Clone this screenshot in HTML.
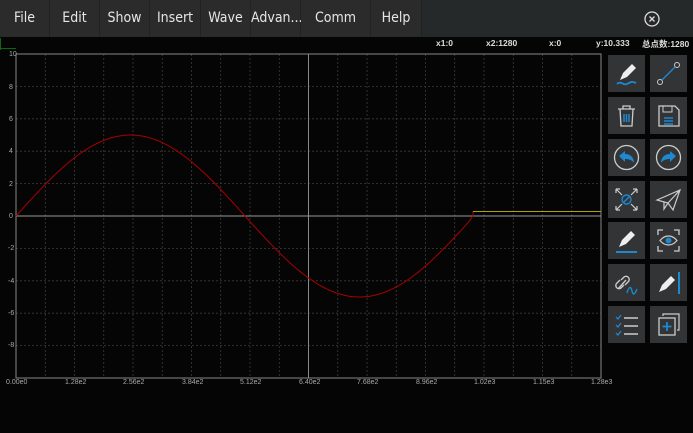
<!DOCTYPE html>
<html><head><meta charset="utf-8"><style>
body{margin:0;width:693px;height:433px;background:#050505;overflow:hidden;font-family:"Liberation Sans","Noto Sans CJK SC",sans-serif;position:relative}
.menu{position:absolute;left:0;top:0;width:693px;height:37px;background:#26292a}
.menu div{position:absolute;top:0;height:37px;line-height:37px;text-align:center;color:#e6e6e6;font-size:14px;font-family:"Liberation Sans Narrow","DejaVu Sans Condensed","Liberation Sans",sans-serif;background:#2b2b2b;border-right:1px solid #222}
.st{position:absolute;top:38px;font-size:8.5px;color:#ddd;font-weight:bold}
.btn{position:absolute;width:37px;height:37px;background:#333436}
.btn svg{width:37px;height:37px}
.xl{position:absolute;top:379px;font-size:7px;color:#aaa}
.yl{position:absolute;left:9px;font-size:7px;color:#aaa}
</style></head><body>
<div class="menu">
<div style="left:0;width:49px">File</div>
<div style="left:50px;width:49px">Edit</div>
<div style="left:100px;width:49px">Show</div>
<div style="left:150px;width:50px">Insert</div>
<div style="left:201px;width:49px">Wave</div>
<div style="left:251px;width:49px">Advan...</div>
<div style="left:301px;width:69px">Comm</div>
<div style="left:371px;width:50px">Help</div>
<svg style="position:absolute;left:643px;top:10px" width="18" height="18"><circle cx="9" cy="9" r="7" fill="none" stroke="#ddd" stroke-width="1.3"/><path d="M6.5 6.5L11.5 11.5M11.5 6.5L6.5 11.5" stroke="#ddd" stroke-width="1.3"/></svg>
</div>
<div style="position:absolute;left:0;top:38px;width:1px;height:12px;background:#0a6a0a"></div>
<div style="position:absolute;left:0;top:48px;width:16px;height:1px;background:#0a6a0a"></div>
<div class="st" style="left:436px">x1:0</div>
<div class="st" style="left:486px">x2:1280</div>
<div class="st" style="left:549px">x:0</div>
<div class="st" style="left:596px">y:10.333</div>
<div class="st" style="left:642px">总点数:1280</div>
<svg id="plot" style="position:absolute;left:0;top:0" width="605" height="433"></svg>
<div class="yl" style="top:51px">10</div><div class="yl" style="top:84px">8</div><div class="yl" style="top:116px">6</div><div class="yl" style="top:148px">4</div><div class="yl" style="top:181px">2</div><div class="yl" style="top:213px">0</div><div class="yl" style="top:245px;left:8px">-2</div><div class="yl" style="top:278px;left:8px">-4</div><div class="yl" style="top:310px;left:8px">-6</div><div class="yl" style="top:342px;left:8px">-8</div>
<div class="xl" style="left:6px">0.00e0</div><div class="xl" style="left:65px">1.28e2</div><div class="xl" style="left:123px">2.56e2</div><div class="xl" style="left:182px">3.84e2</div><div class="xl" style="left:240px">5.12e2</div><div class="xl" style="left:299px">6.40e2</div><div class="xl" style="left:357px">7.68e2</div><div class="xl" style="left:416px">8.96e2</div><div class="xl" style="left:474px">1.02e3</div><div class="xl" style="left:533px">1.15e3</div><div class="xl" style="left:591px">1.28e3</div>
<script>
var s='',L=16,T=54,R=601,B=378;
for(var i=1;i<20;i++){var x=L+i*(R-L)/20;s+='<line x1="'+x+'" y1="'+T+'" x2="'+x+'" y2="'+B+'" stroke="#3c3c3c" stroke-dasharray="2,2" stroke-width="0.8"/>';}
for(var i=1;i<10;i++){var y=T+i*(B-T)/10;s+='<line x1="'+L+'" y1="'+y+'" x2="'+R+'" y2="'+y+'" stroke="#3c3c3c" stroke-dasharray="2,2" stroke-width="0.8"/>';}
s+='<rect x="'+L+'" y="'+T+'" width="'+(R-L)+'" height="'+(B-T)+'" fill="none" stroke="#888"/>';
s+='<line x1="308.5" y1="'+T+'" x2="308.5" y2="'+B+'" stroke="#888"/>';
s+='<line x1="'+L+'" y1="216" x2="'+R+'" y2="216" stroke="#999"/>';
var p='M';for(var x=L;x<=471;x+=3){var y=216-16.2*5*Math.sin(2*Math.PI*(x-L)/458);p+=x.toFixed(1)+' '+y.toFixed(1)+' L';}
p+='473 216 L473 211';
s+='<path d="'+p+'" fill="none" stroke="#a00" stroke-width="1"/>';
s+='<line x1="473" y1="211.5" x2="'+R+'" y2="211.5" stroke="#b0a000"/>';
document.getElementById('plot').innerHTML=s;
</script>
<div class="btn" style="left:608px;top:55px"><svg><path d="M12 25l3-7 9-9 4 4-9 9z" fill="#eee"/><path d="M9 29c4-4 6 2 10 0s4-3 9-1" stroke="#1e88d0" stroke-width="1.8" fill="none"/></svg></div>
<div class="btn" style="left:650px;top:55px"><svg><circle cx="10" cy="27" r="2.5" fill="none" stroke="#ccc"/><circle cx="27" cy="10" r="2.5" fill="none" stroke="#ccc"/><path d="M12 25L25 12" stroke="#1e88d0" stroke-width="1.3"/></svg></div>
<div class="btn" style="left:608px;top:97px"><svg><path d="M10 12h17M15 12v-3h7v3M12 12l1 17h11l1-17" fill="none" stroke="#ccc" stroke-width="1.3"/><path d="M16 17v8M18.5 17v8M21 17v8" stroke="#1e88d0" stroke-width="1.5"/></svg></div>
<div class="btn" style="left:650px;top:97px"><svg><path d="M9 9h16l4 4v16H9z" fill="none" stroke="#ccc" stroke-width="1.3"/><rect x="13" y="9" width="9" height="6" fill="none" stroke="#ccc"/><path d="M14 21h9M14 24h9M14 27h9" stroke="#1e88d0" stroke-width="1.5"/></svg></div>
<div class="btn" style="left:608px;top:139px"><svg><circle cx="18.5" cy="18.5" r="12" fill="none" stroke="#ccc" stroke-width="1.3"/><path d="M11 17l6-5v3c6 0 9 4 9 9-2-3-5-4-9-4v3z" fill="#1e88d0"/></svg></div>
<div class="btn" style="left:650px;top:139px"><svg><circle cx="18.5" cy="18.5" r="12" fill="none" stroke="#ccc" stroke-width="1.3"/><path d="M26 17l-6-5v3c-6 0-9 4-9 9 2-3 5-4 9-4v3z" fill="#1e88d0"/></svg></div>
<div class="btn" style="left:608px;top:181px"><svg><path d="M8 8l6 6M8 8h4M8 8v4M29 8l-6 6M29 8h-4M29 8v4M8 29l6-6M8 29h4M8 29v-4M29 29l-6-6M29 29h-4M29 29v-4" stroke="#ccc" stroke-width="1.2" fill="none"/><circle cx="18.5" cy="18.5" r="4.5" fill="none" stroke="#1e88d0" stroke-width="1.4"/><path d="M15.5 21.5l6-6" stroke="#1e88d0" stroke-width="1.4"/></svg></div>
<div class="btn" style="left:650px;top:181px"><svg><path d="M7 19L30 9 23 29 18 22zM18 22L30 9M14 21v7l4-6" fill="none" stroke="#ccc" stroke-width="1.2"/></svg></div>
<div class="btn" style="left:608px;top:222px"><svg><path d="M11 25l3-7 9-9 4 4-9 9z" fill="#eee"/><path d="M8 30h21" stroke="#1e88d0" stroke-width="2"/></svg></div>
<div class="btn" style="left:650px;top:222px"><svg><path d="M8 13V8h5M24 8h5v5M29 24v5h-5M13 29H8v-5" stroke="#ccc" stroke-width="1.3" fill="none"/><path d="M10 18.5c5-6 12-6 17 0-5 6-12 6-17 0z" fill="none" stroke="#ccc" stroke-width="1.2"/><circle cx="18.5" cy="18.5" r="3" fill="#1e88d0"/></svg></div>
<div class="btn" style="left:608px;top:264px"><svg><path d="M10 25l8-9M12 16l-3 3a3 3 0 0 0 4 5l3-3M17 21l3-3a3 3 0 0 0-4-5l-3 3" fill="none" stroke="#ccc" stroke-width="1.4"/><path d="M19 29c2-7 4-7 5-2s3 3 5-2" fill="none" stroke="#1e88d0" stroke-width="1.4"/></svg></div>
<div class="btn" style="left:650px;top:264px"><svg><path d="M9 28l3-7 9-9 4 4-9 9z" fill="#eee"/><path d="M29 8v22" stroke="#1e88d0" stroke-width="2"/></svg></div>
<div class="btn" style="left:608px;top:306px"><svg><path d="M8 11l2 2 3-4M8 19l2 2 3-4M8 27l2 2 3-4" stroke="#1e88d0" stroke-width="1.3" fill="none"/><path d="M16 12h14M16 20h14M16 28h14" stroke="#ccc" stroke-width="1.5"/></svg></div>
<div class="btn" style="left:650px;top:306px"><svg><path d="M13 10V8h16v16h-2" fill="none" stroke="#ccc" stroke-width="1.2"/><rect x="9" y="12" width="16" height="17" fill="none" stroke="#ccc" stroke-width="1.3"/><path d="M17 16v9M12.5 20.5h9" stroke="#1e88d0" stroke-width="1.8"/></svg></div>
</body></html>
